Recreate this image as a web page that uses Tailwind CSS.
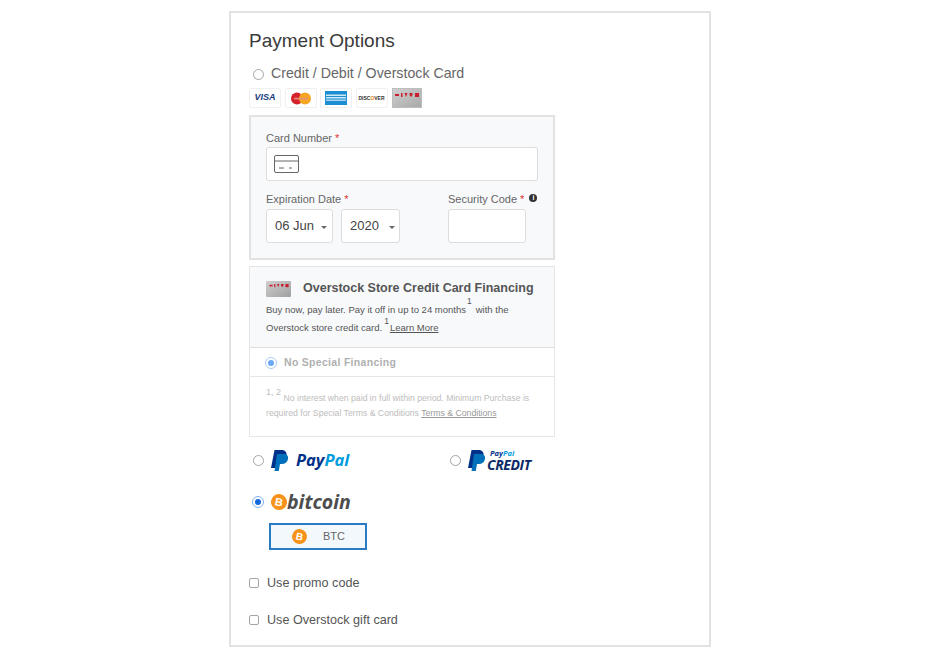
<!DOCTYPE html>
<html lang="en">
<head>
<meta charset="UTF-8">
<title>Payment Options</title>
<script src="https://cdn.jsdelivr.net/npm/@tailwindcss/browser@4"></script>
</head>
<body class="bg-white font-['Liberation_Sans',Arial,sans-serif] text-[#555]">
<div class="ml-[229px] mt-[11px] w-[482px] h-[636px] border-2 border-[#e2e2e2] pl-[18px] pt-[14px]">

  <h2 class="text-[19px] leading-[28px] text-[#3a3a3a] h-[28px]">Payment Options</h2>

  <!-- card option -->
  <div class="flex items-center h-[24px] mt-[7px] pl-[4px]">
    <span class="w-[11px] h-[11px] rounded-full border border-[#a5a5a5] bg-white"></span>
    <span class="ml-[7px] text-[14.2px] text-[#666]">Credit / Debit / Overstock Card</span>
  </div>

  <div class="flex mt-[2px] h-[20px] gap-[3.5px]">
    <div class="w-[32px] h-[20px] border border-[#f0f0f0] rounded-[2px] flex items-center justify-center">
      <span class="text-[9px] font-bold italic text-[#1a3a7c]">VISA</span>
    </div>
    <div class="w-[32px] h-[20px] border border-[#f0f0f0] rounded-[2px] flex items-center justify-center">
      <svg width="22" height="13" viewBox="0 0 22 13"><circle cx="7" cy="6.5" r="6" fill="#d5222c"/><circle cx="15" cy="6.5" r="6" fill="#f6a623"/><rect x="4" y="5.8" width="14" height="1.6" fill="#e58f7e"/></svg>
    </div>
    <div class="w-[32px] h-[20px] border border-[#f0f0f0] rounded-[2px] flex items-center justify-center">
      <svg width="22" height="14" viewBox="0 0 22 14"><rect width="22" height="14" fill="#1b8fd2"/><rect x="1" y="3.5" width="20" height="1.5" fill="#cfe8f7"/><rect x="1" y="6" width="20" height="1.5" fill="#cfe8f7"/><rect x="1" y="8.5" width="20" height="1.5" fill="#a9d6f0"/></svg>
    </div>
    <div class="w-[32px] h-[20px] border border-[#f0f0f0] rounded-[2px] flex items-center justify-center">
      <span class="text-[5px] font-bold text-[#333] leading-none">DISC<span class="text-[#f08a1d]">O</span>VER</span>
    </div>
    <div class="ml-[1px] w-[30px] h-[20px] bg-gradient-to-br from-[#cfcfcf] to-[#a9a9a9] border border-[#bdbdbd] flex justify-center pt-[4px]">
      <svg width="24" height="5" viewBox="0 0 24 5" fill="#c8202f"><rect x="0" y="1" width="4" height="2"/><rect x="6" y="0" width="1.5" height="4"/><path d="M9.5 0h3l-1.5 4z"/><path d="M14.5 0h3v2l-1.5 2-1.5-2z"/><rect x="20" y="0" width="4" height="4"/></svg>
    </div>
  </div>

  <!-- card form -->
  <div class="mt-[7px] w-[306px] h-[145px] border-2 border-[#e2e2e2] bg-[#f8f9fb] pl-[15px] pt-[13px]">
    <div class="text-[11px] leading-[16px] h-[16px] text-[#666]">Card Number <span class="text-[#d33]">*</span></div>
    <div class="mt-[1px] w-[272px] h-[34px] bg-white border border-[#ddd] rounded-[3px] flex items-center pl-[7px]">
      <svg width="25" height="18" viewBox="0 0 25 18" fill="none" stroke="#666"><rect x="0.5" y="0.5" width="24" height="17" rx="1.5"/><path d="M1 6h23"/><path d="M5 13h5M15 13h3" /></svg>
    </div>
    <div class="flex mt-[10px]">
      <div class="w-[182px]">
        <div class="text-[11px] leading-[16px] h-[16px] text-[#666]">Expiration Date <span class="text-[#d33]">*</span></div>
        <div class="flex gap-[8px] mt-[2px]">
          <div class="w-[67px] h-[34px] bg-white border border-[#ddd] rounded-[3px] flex items-center pl-[8px] text-[13px] text-[#444]">
            06 Jun<span class="ml-[7px] w-0 h-0 border-x-[3px] border-x-transparent border-t-[3px] border-t-[#666] mt-[2px]"></span>
          </div>
          <div class="w-[59px] h-[34px] bg-white border border-[#ddd] rounded-[3px] flex items-center pl-[8px] text-[13px] text-[#444]">
            2020<span class="ml-[10px] w-0 h-0 border-x-[3px] border-x-transparent border-t-[3px] border-t-[#666] mt-[2px]"></span>
          </div>
        </div>
      </div>
      <div>
        <div class="text-[11px] leading-[16px] h-[16px] text-[#666] flex items-center">Security Code <span class="text-[#d33] ml-[3px]">*</span>
          <span class="ml-[5px] mb-[2px] w-[8px] h-[8px] rounded-full bg-[#333] text-white text-[7px] leading-[8px] text-center font-bold">i</span>
        </div>
        <div class="mt-[2px] w-[78px] h-[34px] bg-white border border-[#ddd] rounded-[3px]"></div>
      </div>
    </div>
  </div>

  <!-- financing -->
  <div class="mt-[6px] w-[306px] h-[171px] border border-[#e6e6e6]">
    <div class="h-[81px] bg-[#f8f9fb] border-b border-[#ddd] pl-[16px] pt-[13px]">
      <div class="flex items-center h-[17px]">
        <div class="w-[25px] h-[16px] bg-gradient-to-br from-[#cfcfcf] to-[#a0a0a0] flex justify-center pt-[3px] rounded-[1px]">
          <svg width="20" height="4" viewBox="0 0 24 5" fill="#c8202f"><rect x="0" y="1" width="4" height="2"/><rect x="6" y="0" width="1.5" height="4"/><path d="M9.5 0h3l-1.5 4z"/><path d="M14.5 0h3v2l-1.5 2-1.5-2z"/><rect x="20" y="0" width="4" height="4"/></svg>
        </div>
        <span class="ml-[12px] text-[12.5px] font-bold text-[#555]">Overstock Store Credit Card Financing</span>
      </div>
      <p class="text-[9.5px] leading-[18px] text-[#555] mt-[4px] whitespace-nowrap">Buy now, pay later. Pay it off in up to 24 months<sup class="text-[8.5px] relative -top-[9px] ml-[1px] mr-[4px]">1</sup>with the</p>
      <p class="text-[9.5px] leading-[18px] text-[#555] whitespace-nowrap">Overstock store credit card.<sup class="text-[8.5px] relative -top-[7px] ml-[2px] mr-[1px]">1</sup><span class="underline">Learn More</span></p>
    </div>
    <div class="h-[29px] border-b border-[#e6e6e6] flex items-center pl-[16px] pt-[1px]">
      <span class="w-[10px] h-[10px] rounded-full bg-[#6aa9f4] border-2 border-white outline outline-[#a9cdf5]"></span>
      <span class="ml-[8px] text-[10.5px] font-bold text-[#b0b0b0] tracking-[0.3px]">No Special Financing</span>
    </div>
    <div class="pl-[16px] pt-[13px] text-[8.7px] leading-[14px] text-[#bdbdbd] whitespace-nowrap">
      <p class="leading-[16px]"><span class="relative -top-[6px] text-[9px]">1, 2</span> No interest when paid in full within period. Minimum Purchase is</p>
      <p>required for Special Terms &amp; Conditions <span class="underline text-[#999]">Terms &amp; Conditions</span></p>
    </div>
  </div>

  <!-- paypal options -->
  <div class="flex mt-[9px] h-[28px] items-center">
    <div class="w-[201px] flex items-center pl-[4px]">
      <span class="w-[11px] h-[11px] rounded-full border border-[#a5a5a5] bg-white"></span>
      <svg class="ml-[7px]" width="18" height="21" viewBox="0 0 18 21"><path d="M3.5 0h7c4 0 5.5 2.5 5 5.5-.7 4-3.500 5.500-7 5.500H6l-1.300 7H0z" fill="#003087"/><path d="M6 4h6.500c3.500 0 5 2 4.500 5-.7 3.500-3.200 5-6 5H9l-1.200 7H3.500z" fill="#0070ba"/></svg>
      <span class="ml-[7px] text-[16.500px] font-bold italic text-[#003087] font-['Open_Sans',sans-serif] leading-none">Pay<span class="text-[#009cde]">Pal</span></span>
    </div>
    <div class="flex items-center">
      <span class="w-[11px] h-[11px] rounded-full border border-[#a5a5a5] bg-white"></span>
      <svg class="ml-[7px]" width="18" height="21" viewBox="0 0 18 21"><path d="M3.5 0h7c4 0 5.500 2.500 5 5.500-.7 4-3.500 5.500-7 5.500H6l-1.300 7H0z" fill="#003087"/><path d="M6 4h6.500c3.500 0 5 2 4.500 5-.7 3.500-3.200 5-6 5H9l-1.200 7H3.500z" fill="#0070ba"/></svg>
      <div class="ml-[1px] flex flex-col gap-[2px] font-['Open_Sans',sans-serif] italic font-bold leading-none">
        <span class="text-[7.500px] leading-[8px] text-[#003087] ml-[3px]">Pay<span class="text-[#009cde]">Pal</span></span>
        <span class="text-[14px] leading-[12px] text-[#0b2a66] tracking-[-0.4px]">CREDIT</span>
      </div>
    </div>
  </div>

  <!-- bitcoin -->
  <div class="flex items-center h-[30px] mt-[13px] pl-[4px]">
    <span class="w-[10px] h-[10px] rounded-full bg-[#1268dd] border-2 border-white outline outline-[#7fb0ee]"></span>
    <span class="ml-[8px] w-[16px] h-[16px] rounded-full bg-[#f7931a] text-white text-[11px] font-bold leading-[16px] text-center rotate-12">B</span>
    <span class="text-[19.5px] font-bold italic text-[#4d4d4d] font-['Open_Sans',sans-serif] leading-none">bitcoin</span>
  </div>
  <div class="ml-[20px] mt-[6px] w-[98px] h-[27px] border-2 border-[#2b7bc4] bg-[#f2f8fc] flex items-center pl-[21px]">
    <span class="w-[15px] h-[15px] rounded-full bg-[#f7931a] text-white text-[10px] font-bold leading-[15px] text-center rotate-12">B</span>
    <span class="ml-[16px] text-[11px] text-[#666]">BTC</span>
  </div>

  <!-- extras -->
  <div class="flex items-center h-[20px] mt-[23px]">
    <span class="w-[10px] h-[10px] rounded-[2px] border border-[#a5a5a5] bg-white"></span>
    <span class="ml-[8px] text-[12.6px] text-[#555]">Use promo code</span>
  </div>
  <div class="flex items-center h-[20px] mt-[17px]">
    <span class="w-[10px] h-[10px] rounded-[2px] border border-[#a5a5a5] bg-white"></span>
    <span class="ml-[8px] text-[12.6px] text-[#555]">Use Overstock gift card</span>
  </div>
</div>
</body>
</html>
